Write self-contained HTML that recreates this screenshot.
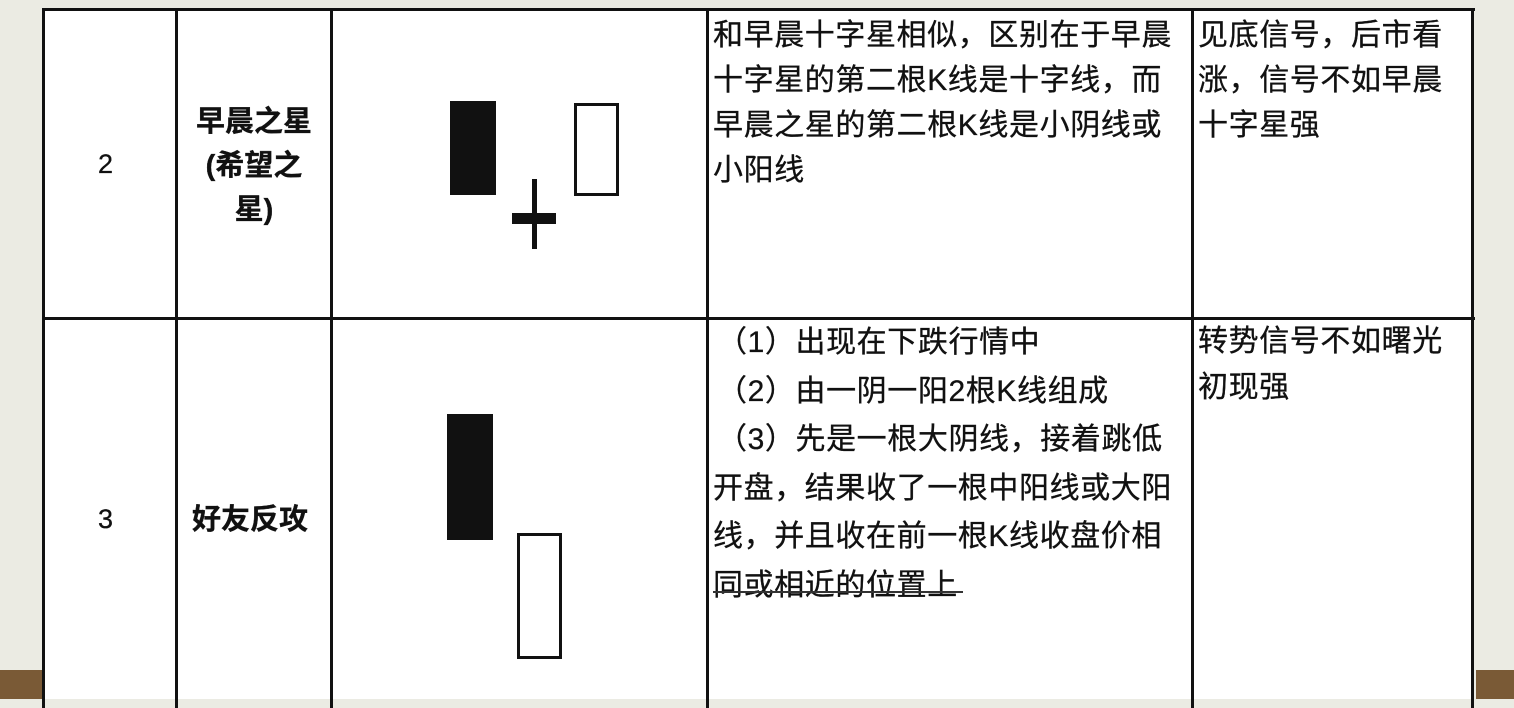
<!DOCTYPE html>
<html><head><meta charset="utf-8"><style>
body{margin:0;width:1514px;height:699px;overflow:hidden;background:#ebebe3;position:relative;font-family:"Liberation Sans","Noto Sans CJK SC",sans-serif;color:#111}
.a{position:absolute}
.v{position:absolute;top:8px;height:700px;width:3px;background:#111}
.h{position:absolute;left:42px;width:1433px;height:3px;background:#111}
.t{position:absolute;font-size:30px;letter-spacing:0.6px;line-height:45px;white-space:nowrap;-webkit-text-stroke:0.3px #111}
.b{font-weight:bold}
</style></head><body>
<div class="a" style="left:0;top:670px;width:42px;height:29px;background:#7a5a36"></div>
<div class="a" style="left:1476px;top:670px;width:38px;height:29px;background:#7a5a36"></div>
<div class="a" style="left:43px;top:8px;width:1430px;height:691px;background:#fff"></div>
<div class="h" style="top:8px"></div>
<div class="h" style="top:317px"></div>
<div class="v" style="left:42px"></div>
<div class="v" style="left:175px"></div>
<div class="v" style="left:330px"></div>
<div class="v" style="left:706px"></div>
<div class="v" style="left:1191px"></div>
<div class="v" style="left:1471px"></div>

<div class="t" style="left:98px;top:142px;font-size:27px">2</div>
<div class="t b" style="left:182px;top:100px;line-height:44px;text-align:center;width:144px;white-space:normal;font-size:29px;letter-spacing:0">早晨之星<br>(希望之<br>星)</div>
<div class="t" style="left:98px;top:497px;font-size:27px">3</div>
<div class="t b" style="left:192px;top:498px;font-size:29px;letter-spacing:0">好友反攻</div>

<svg class="a" style="left:331px;top:11px" width="375" height="688">
<rect x="119" y="90" width="46" height="94" fill="#111"/>
<rect x="244.5" y="93.5" width="42" height="90" fill="none" stroke="#111" stroke-width="3"/>
<rect x="181" y="202" width="44" height="11" fill="#111"/>
<rect x="201" y="168" width="5" height="70" fill="#111"/>
<rect x="116" y="403" width="46" height="126" fill="#111"/>
<rect x="187.5" y="523.5" width="42" height="123" fill="none" stroke="#111" stroke-width="3"/>
</svg>

<div class="t" style="left:713px;top:13px">和早晨十字星相似，区别在于早晨<br>十字星的第二根K线是十字线，而<br>早晨之星的第二根K线是小阴线或<br>小阳线</div>
<div class="t" style="left:1198px;top:13px">见底信号，后市看<br>涨，信号不如早晨<br>十字星强</div>
<div class="t" style="left:713px;top:319px;line-height:48.5px"><span style="margin-left:4px">（1）出现在下跌行情中</span><br><span style="margin-left:4px">（2）由一阴一阳2根K线组成</span><br><span style="margin-left:4px">（3）先是一根大阴线，接着跳低</span><br>开盘，结果收了一根中阳线或大阳<br>线，并且收在前一根K线收盘价相<br>同或相近的位置上</div>
<div class="a" style="left:713px;top:591px;width:250px;height:2px;background:#333"></div>
<div class="t" style="left:1198px;top:319px;line-height:46px">转势信号不如曙光<br>初现强</div>
</body></html>
